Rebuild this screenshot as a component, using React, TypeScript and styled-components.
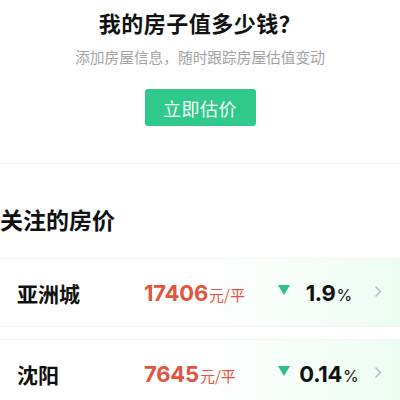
import styled, { createGlobalStyle } from "styled-components";

const GlobalStyle = createGlobalStyle`
  html, body {
    margin: 0;
    padding: 0;
    background: #ffffff;
  }
  body {
    font-family: "Noto Sans CJK SC", "Noto Sans", sans-serif;
  }
`;

interface WatchItem {
  name: string;
  price: string;
  change: string;
}

const items: WatchItem[] = [
  { name: "亚洲城", price: "17406", change: "1.9" },
  { name: "沈阳", price: "7645", change: "0.14" },
];

const Page = styled.div`
  width: 400px;
  height: 400px;
  overflow: hidden;
  background: #fff;
`;

const Header = styled.section`
  display: flex;
  flex-direction: column;
  align-items: center;
  padding: 7px 0 37px;
  border-bottom: 1px solid #f1f1f1;
`;

const Title = styled.h1`
  margin: 0;
  font-size: 22px;
  line-height: 30px;
  font-weight: 700;
  color: #111;
  letter-spacing: 0.5px;
`;

const Subtitle = styled.p`
  margin: 10px 0 0;
  font-size: 14.7px;
  line-height: 20px;
  color: #a3a3a3;
`;

const EstimateButton = styled.button`
  margin-top: 22px;
  width: 111px;
  height: 37px;
  border: none;
  border-radius: 3px;
  background: #2ec98b;
  color: #fff;
  font-family: "Noto Sans CJK SC", sans-serif;
  font-size: 18px;
  letter-spacing: 0.5px;
  cursor: pointer;
`;

const SectionTitle = styled.h2`
  margin: 39px 0 23px;
  font-size: 23px;
  line-height: 32px;
  font-weight: 700;
  color: #111;
`;

const List = styled.div`
  display: flex;
  flex-direction: column;
  gap: 12px;
`;

const Card = styled.div`
  display: grid;
  grid-template-columns: 127px 134px 16px 70px 1fr;
  align-items: center;
  height: 67px;
  padding-left: 17px;
  border-top: 1px solid #f3f4f3;
  border-bottom: 1px solid #f3f4f3;
  background: linear-gradient(90deg, #ffffff 0%, #ffffff 50%, #edfcf2 100%);
`;

const Name = styled.div`
  font-size: 21px;
  font-weight: 700;
  color: #111;
`;

const Price = styled.div`
  display: flex;
  align-items: baseline;
  color: #e5533d;
`;

const PriceValue = styled.span`
  font-family: "Inter", "Roboto", sans-serif;
  font-size: 22px;
  font-weight: 700;
  letter-spacing: -0.2px;
`;

const PriceUnit = styled.span`
  font-size: 15px;
  margin-left: 1px;
`;

const DownArrow = styled.span`
  width: 0;
  height: 0;
  margin-top: -6px;
  border-left: 6px solid transparent;
  border-right: 6px solid transparent;
  border-top: 10px solid #2fbf8c;
`;

const Change = styled.div`
  display: flex;
  align-items: baseline;
  justify-content: center;
  color: #111;
`;

const ChangeValue = styled.span`
  font-family: "Inter", "Roboto", sans-serif;
  font-size: 22px;
  font-weight: 700;
  letter-spacing: -0.3px;
`;

const ChangeUnit = styled.span`
  font-family: "Inter", "Roboto", sans-serif;
  font-size: 16px;
  margin-left: 1px;
`;

const Chevron = styled.svg`
  justify-self: start;
  margin-left: 10px;
  margin-top: -2px;
`;

export default function App() {
  return (
    <Page>
      <GlobalStyle />
      <Header>
        <Title>我的房子值多少钱？</Title>
        <Subtitle>添加房屋信息，随时跟踪房屋估值变动</Subtitle>
        <EstimateButton>立即估价</EstimateButton>
      </Header>
      <SectionTitle>关注的房价</SectionTitle>
      <List>
        {items.map((item) => (
          <Card key={item.name}>
            <Name>{item.name}</Name>
            <Price>
              <PriceValue>{item.price}</PriceValue>
              <PriceUnit>元/平</PriceUnit>
            </Price>
            <DownArrow />
            <Change>
              <ChangeValue>{item.change}</ChangeValue>
              <ChangeUnit>%</ChangeUnit>
            </Change>
            <Chevron width="8" height="13" viewBox="0 0 8 13">
              <path d="M1.5 1.5 L6.5 6.5 L1.5 11.5" fill="none" stroke="#bdbdbd" strokeWidth="1.5" />
            </Chevron>
          </Card>
        ))}
      </List>
    </Page>
  );
}
